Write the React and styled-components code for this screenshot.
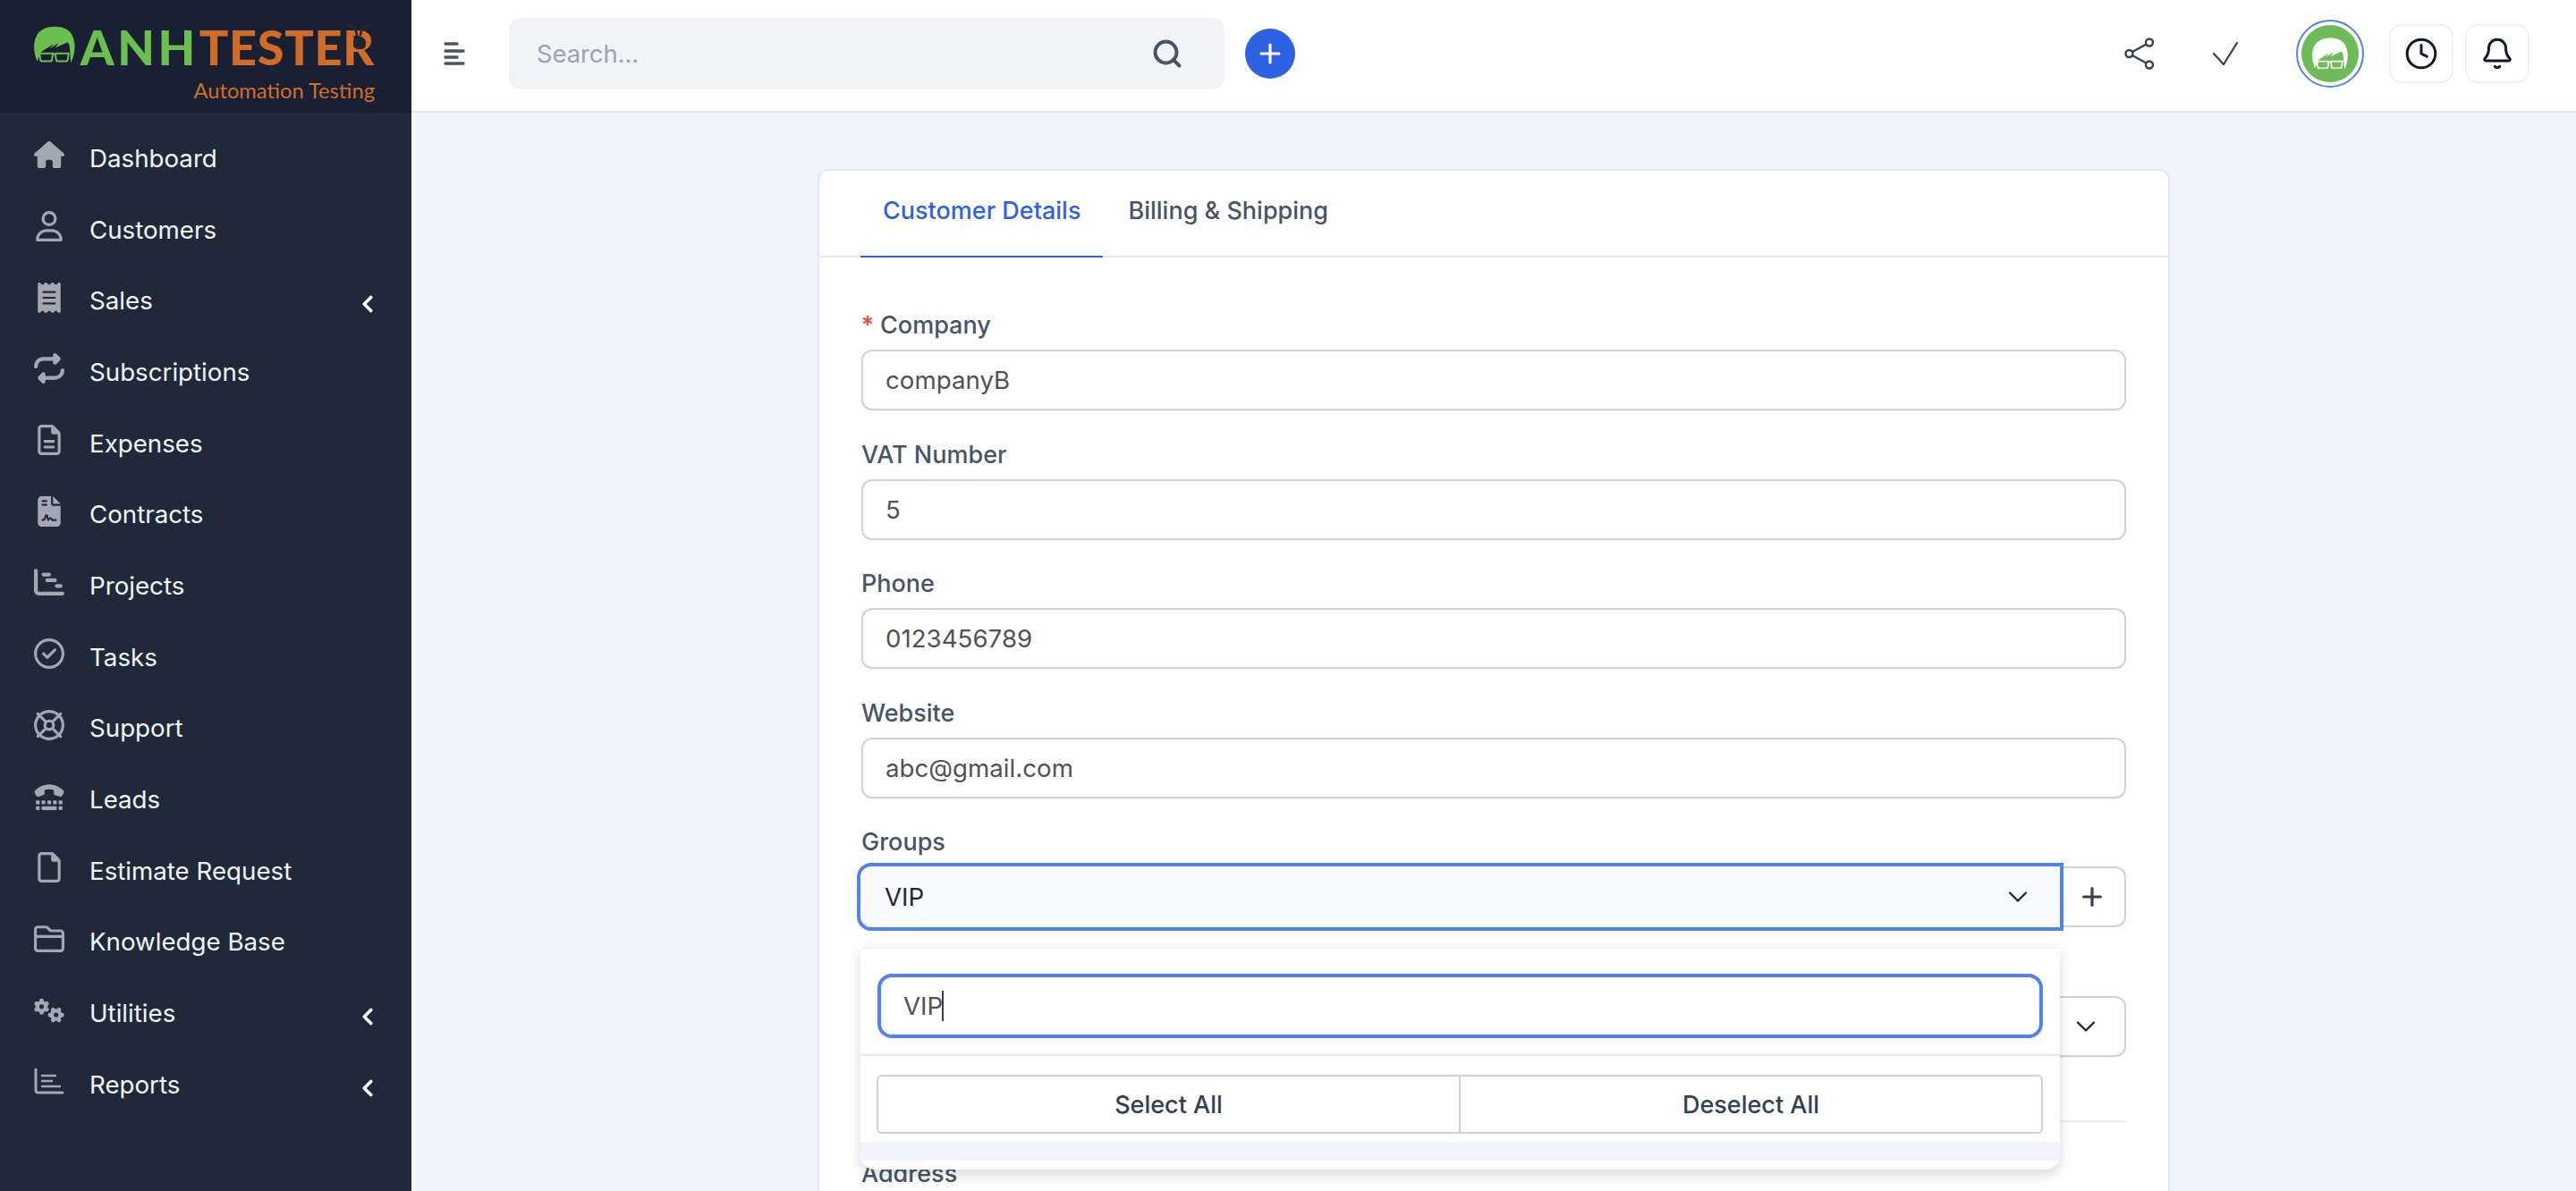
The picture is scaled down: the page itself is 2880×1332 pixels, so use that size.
import React from 'react';
import styled, { createGlobalStyle } from 'styled-components';
import { ChevronLeft, ChevronDown, Plus, Search, Clock, Bell } from 'lucide-react';
import {
  FaHouse, FaRegUser, FaReceipt, FaRepeat, FaRegFileLines, FaFileContract, FaChartGantt,
  FaRegCircleCheck, FaRegLifeRing, FaTty, FaRegFile, FaRegFolderClosed, FaGears,
} from 'react-icons/fa6';

const GlobalStyle = createGlobalStyle`
  html, body { margin: 0; padding: 0; height: 100%; overflow: hidden; }
  body { font-family: Inter, "Liberation Sans", sans-serif; background: #f1f4f9; }
  * { box-sizing: border-box; }
`;

const Page = styled.div`
  display: flex;
  height: 1332px;
  overflow: hidden;
`;

const Sidebar = styled.aside`
  width: 460px;
  flex: none;
  background: #202939;
`;

const LogoBar = styled.div`
  height: 126px;
  background: #1a2033;
  padding: 27px 0 0 38px;
`;

const Logo = styled.div`
  position: relative;
  width: 381px;
`;

const LogoTop = styled.div`
  display: flex;
  align-items: flex-start;
  height: 47px;
`;

const LogoWord = styled.span`
  font-family: Lato, sans-serif;
  font-weight: 900;
  font-size: 54px;
  line-height: 47px;
  margin-left: ${({ $left }) => $left}px;
  letter-spacing: ${({ $spacing }) => $spacing}px;
  color: ${({ $color }) => $color};
  padding-top: 2px;
`;

const LogoSub = styled.div`
  font-family: Lato, sans-serif;
  font-size: 23.7px;
  line-height: 32px;
  color: #cf6d28;
  text-align: right;
  margin-top: 11px;
  white-space: nowrap;
`;

const LogoBug = styled.svg`
  position: absolute;
  top: -4px;
  left: 347px;
`;

const Nav = styled.nav`
  padding-top: 11px;
`;

const NavRow = styled.div`
  display: flex;
  align-items: center;
  height: 79.7px;
  padding: 0 40px 0 38px;
  color: #f1f5f9;
  font-size: 27.7px;
  white-space: nowrap;
`;

const NavIcon = styled.span`
  width: 62px;
  flex: none;
  display: flex;
  align-items: center;
  margin-top: -7px;
  color: #a2a7b1;
  font-size: 34px;
`;

const NavLabel = styled.span`
  flex: 1;
`;

const NavArrow = styled.span`
  display: flex;
  color: #f8fafc;
  margin-top: 8px;
  margin-right: -6px;
`;

const Right = styled.div`
  flex: 1;
  min-width: 0;
  display: flex;
  flex-direction: column;
`;

const Topbar = styled.header`
  height: 126px;
  flex: none;
  background: #fff;
  border-bottom: 2px solid #e2e8f0;
  display: flex;
  align-items: center;
  padding: 0 52px 4px 36px;
`;

const SearchBar = styled.div`
  width: 800px;
  height: 80px;
  margin-left: 49px;
  background: #f1f3f6;
  border-radius: 14px;
  display: flex;
  align-items: center;
  justify-content: space-between;
  padding: 0 46px 0 31px;
  color: #94a3b8;
  font-size: 27.3px;
  svg { color: #475569; }
`;

const RoundAdd = styled.button`
  width: 56px;
  height: 56px;
  margin-left: 23px;
  padding: 0;
  border: none;
  border-radius: 50%;
  background: #2f62e3;
  color: #fff;
  display: flex;
  align-items: center;
  justify-content: center;
`;

const TopActions = styled.div`
  margin-left: auto;
  display: flex;
  align-items: center;
`;

const BareIcon = styled.span`
  display: flex;
  margin-right: ${({ $after }) => $after}px;
  color: #334155;
`;

const AvatarRing = styled.div`
  width: 76px;
  height: 76px;
  margin-right: 28px;
  border: 2px solid #4f83ee;
  border-radius: 50%;
  padding: 4px;
`;

const AvatarFace = styled.div`
  width: 100%;
  height: 100%;
  border-radius: 50%;
  background: #6fbb57;
  display: flex;
  align-items: center;
  justify-content: center;
`;

const SquareButton = styled.button`
  width: 72px;
  height: 66px;
  margin-left: ${({ $left }) => $left || 0}px;
  padding: 0;
  background: #fff;
  border: 2px solid #f0f2f7;
  border-radius: 14px;
  color: #111827;
  display: flex;
  align-items: center;
  justify-content: center;
`;

const Content = styled.main`
  flex: 1;
  overflow: hidden;
  padding-top: 63px;
`;

const Card = styled.section`
  width: 1512px;
  margin: 0 auto;
  background: #fff;
  border: 2px solid #e2e8f0;
  border-bottom: none;
  border-radius: 12px 12px 0 0;
  min-height: 1200px;
`;

const Tabs = styled.div`
  display: flex;
  height: 97px;
  padding-left: 46px;
  border-bottom: 2px solid #e2e8f0;
`;

const Tab = styled.div`
  height: 97px;
  padding: 0 ${({ $active }) => ($active ? 25 : 28)}px 6px;
  display: flex;
  align-items: center;
  font-size: 27px;
  font-weight: 500;
  color: ${({ $active }) => ($active ? '#2f62e3' : '#475569')};
  border-bottom: 2px solid ${({ $active }) => ($active ? '#2f62e3' : 'transparent')};
  margin-bottom: -2px;
  white-space: nowrap;
`;

const FormBody = styled.div`
  padding: 55px 47px 0 47px;
`;

const Field = styled.div`
  position: relative;
  margin-bottom: 28.5px;
`;

const Label = styled.label`
  display: block;
  height: 40px;
  line-height: 42px;
  margin-bottom: 8px;
  font-size: 27px;
  font-weight: 500;
  color: #475569;
`;

const Required = styled.span`
  color: #ef4444;
  margin-right: 7px;
`;

const TextInput = styled.div`
  height: 68px;
  border: 2px solid #cbd5e1;
  border-radius: 12px;
  padding: 0 25px;
  display: flex;
  align-items: center;
  justify-content: ${({ $end }) => ($end ? 'flex-end' : 'flex-start')};
  font-size: 27.7px;
  color: #525252;
  background: #fff;
  box-shadow: 0 1px 2px rgba(15, 23, 42, 0.06);
  svg { color: #1e293b; }
`;

const InputGroup = styled.div`
  display: flex;
  height: 68px;
  margin-left: -1px;
`;

const FocusedSelect = styled.div`
  flex: 1;
  outline: 4px solid #4f83ee;
  border-radius: 12px 0 0 12px;
  background: #f8fafc;
  display: flex;
  align-items: center;
  justify-content: space-between;
  padding: 0 29px 0 27px;
  font-size: 27.7px;
  color: #1e293b;
  position: relative;
  svg { color: #1e293b; }
`;

const AddonButton = styled.button`
  width: 74px;
  padding: 0;
  background: #fff;
  border: 2px solid #cbd5e1;
  border-left: none;
  border-radius: 0 12px 12px 0;
  display: flex;
  align-items: center;
  justify-content: center;
  color: #334155;
`;

const Dropdown = styled.div`
  position: absolute;
  z-index: 5;
  top: 138px;
  left: -1px;
  width: 1341px;
  height: 249px;
  background: #fff;
  border-top: 2px solid #f3f4f6;
  border-radius: 0 0 16px 16px;
  box-shadow: 0 6px 14px rgba(15, 23, 42, 0.16);
`;

const DropdownSearch = styled.div`
  height: 72px;
  margin: 28px 19px 0;
  border: 4px solid #4f83ee;
  border-radius: 16px;
  padding: 0 25px;
  display: flex;
  align-items: center;
  font-size: 27.7px;
  color: #525252;
`;

const Caret = styled.span`
  width: 2px;
  height: 34px;
  background: #334155;
  margin-left: -1px;
`;

const DropdownDivider = styled.div`
  height: 2px;
  margin-top: 18px;
  background: #e2e8f0;
`;

const ButtonRow = styled.div`
  display: flex;
  height: 66px;
  margin: 21px 19px 0 18px;
`;

const BulkButton = styled.button`
  flex: 1;
  padding: 0;
  background: #fff;
  border: 2px solid #cbd5e1;
  border-left-width: ${({ $last }) => ($last ? 0 : 2)}px;
  border-radius: ${({ $last }) => ($last ? '0 6px 6px 0' : '6px 0 0 6px')};
  font-family: inherit;
  font-size: 27px;
  font-weight: 500;
  color: #334155;
`;

const Stripe = styled.div`
  height: 21px;
  margin-top: 9px;
  background: #f1f5f9;
`;

const Rule = styled.hr`
  border: none;
  height: 2px;
  margin: 71px 0 37px;
  background: #e9ebef;
`;

const HeadMark = ({ hair, width, height }) => (
  <svg width={width} height={height} viewBox="0 0 52 47">
    <path
      fill={hair}
      d="M4 44C-1 32-1 20 3 12 8 3 17 0 26 0c10 0 19 3 23 12 4 9 4 20-2 34-1-6-1-13-2-22-1-3-2-4-3-4L27 27l4-6-11 7 5-6-13 8c-3 2-4 3-4 5z"
    />
    <g fill="none" stroke={hair} strokeWidth="2.2" strokeLinejoin="round">
      <path d="M7 34h17l-1 7c0 2-1 3-3 3h-9c-2 0-3-1-3-3z" />
      <path d="M27 34h17l-1 7c0 2-1 3-3 3h-9c-2 0-3-1-3-3z" />
      <path d="M24 35h3" />
    </g>
  </svg>
);

const ReportsIcon = () => (
  <svg width="34" height="30" viewBox="0 0 34 30" fill="none" stroke="currentColor" strokeWidth="3" strokeLinecap="round">
    <path d="M2 2v23c0 2 1 3 3 3h27" />
    <path d="M9 9h15M9 15h11M9 21h20" strokeWidth="2.4" />
  </svg>
);

const navItems = [
  { label: 'Dashboard', icon: <FaHouse /> },
  { label: 'Customers', icon: <FaRegUser /> },
  { label: 'Sales', icon: <FaReceipt />, arrow: true },
  { label: 'Subscriptions', icon: <FaRepeat /> },
  { label: 'Expenses', icon: <FaRegFileLines /> },
  { label: 'Contracts', icon: <FaFileContract /> },
  { label: 'Projects', icon: <FaChartGantt /> },
  { label: 'Tasks', icon: <FaRegCircleCheck /> },
  { label: 'Support', icon: <FaRegLifeRing /> },
  { label: 'Leads', icon: <FaTty /> },
  { label: 'Estimate Request', icon: <FaRegFile /> },
  { label: 'Knowledge Base', icon: <FaRegFolderClosed /> },
  { label: 'Utilities', icon: <FaGears />, arrow: true },
  { label: 'Reports', icon: <ReportsIcon />, arrow: true },
];

const textFields = [
  { label: 'VAT Number', value: '5' },
  { label: 'Phone', value: '0123456789' },
  { label: 'Website', value: 'abc@gmail.com' },
];

export default function App() {
  return (
    <Page>
      <GlobalStyle />
      <Sidebar>
        <LogoBar>
          <Logo>
            <LogoTop>
              <HeadMark hair="#6cbf4f" width={52} height={47} />
              <LogoWord $left={6} $spacing={3.5} $color="#6cbf4f">ANH</LogoWord>
              <LogoWord $left={1} $spacing={0.7} $color="#cf6d28">TESTER</LogoWord>
            </LogoTop>
            <LogoSub>Automation Testing</LogoSub>
            <LogoBug width="32" height="32" viewBox="0 0 32 32" fill="none">
              <path d="M14 16C13 9 10 5 3 5M18 16C19 9 22 5 30 5" stroke="#26262b" strokeWidth="2.6" strokeLinecap="round" />
              <rect x="10" y="19" width="14" height="13" rx="5" fill="#1f2433" />
            </LogoBug>
          </Logo>
        </LogoBar>
        <Nav>
          {navItems.map((item) => (
            <NavRow key={item.label}>
              <NavIcon>{item.icon}</NavIcon>
              <NavLabel>{item.label}</NavLabel>
              {item.arrow && (
                <NavArrow>
                  <ChevronLeft size={30} strokeWidth={3} />
                </NavArrow>
              )}
            </NavRow>
          ))}
        </Nav>
      </Sidebar>
      <Right>
        <Topbar>
          <svg width="24" height="26" viewBox="0 0 24 26" stroke="#475569" strokeWidth="3.4" strokeLinecap="round">
            <path d="M2 2h13M2 10h20M2 17h13M2 24h20" />
          </svg>
          <SearchBar>
            Search...
            <Search size={36} strokeWidth={2.6} />
          </SearchBar>
          <RoundAdd>
            <Plus size={34} strokeWidth={2.2} />
          </RoundAdd>
          <TopActions>
            <BareIcon $after={65}>
              <svg width="34" height="36" viewBox="0 0 34 36" fill="none" stroke="currentColor" strokeWidth="2.4">
                <circle cx="5.5" cy="18" r="4" />
                <circle cx="28" cy="5.5" r="4" />
                <circle cx="28" cy="30.5" r="4" />
                <path d="M9 16l15.5-8.5M9 20l15.5 8.5" />
              </svg>
            </BareIcon>
            <BareIcon $after={65}>
              <svg width="28" height="26" viewBox="0 0 28 26" fill="none" stroke="currentColor" strokeWidth="2.2" strokeLinecap="round">
                <path d="M1 13l11 12L27 1" />
              </svg>
            </BareIcon>
            <AvatarRing>
              <AvatarFace>
                <HeadMark hair="#fbfdf9" width={40} height={37} />
              </AvatarFace>
            </AvatarRing>
            <SquareButton>
              <Clock size={38} strokeWidth={1.9} />
            </SquareButton>
            <SquareButton $left={13}>
              <Bell size={38} strokeWidth={1.9} />
            </SquareButton>
          </TopActions>
        </Topbar>
        <Content>
          <Card>
            <Tabs>
              <Tab $active>Customer Details</Tab>
              <Tab>Billing &amp; Shipping</Tab>
            </Tabs>
            <FormBody>
              <Field>
                <Label><Required>*</Required>Company</Label>
                <TextInput>companyB</TextInput>
              </Field>
              {textFields.map((field) => (
                <Field key={field.label}>
                  <Label>{field.label}</Label>
                  <TextInput>{field.value}</TextInput>
                </Field>
              ))}
              <Field>
                <Label>Groups</Label>
                <InputGroup>
                  <FocusedSelect>
                    VIP
                    <ChevronDown size={36} strokeWidth={1.6} />
                  </FocusedSelect>
                  <AddonButton>
                    <Plus size={32} strokeWidth={2.4} />
                  </AddonButton>
                </InputGroup>
                <Dropdown>
                  <DropdownSearch>VIP<Caret /></DropdownSearch>
                  <DropdownDivider />
                  <ButtonRow>
                    <BulkButton>Select All</BulkButton>
                    <BulkButton $last>Deselect All</BulkButton>
                  </ButtonRow>
                  <Stripe />
                </Dropdown>
              </Field>
              <Field>
                <Label>&nbsp;</Label>
                <TextInput $end>
                  <ChevronDown size={36} strokeWidth={1.6} />
                </TextInput>
              </Field>
              <Rule />
              <Label>Address</Label>
            </FormBody>
          </Card>
        </Content>
      </Right>
    </Page>
  );
}
